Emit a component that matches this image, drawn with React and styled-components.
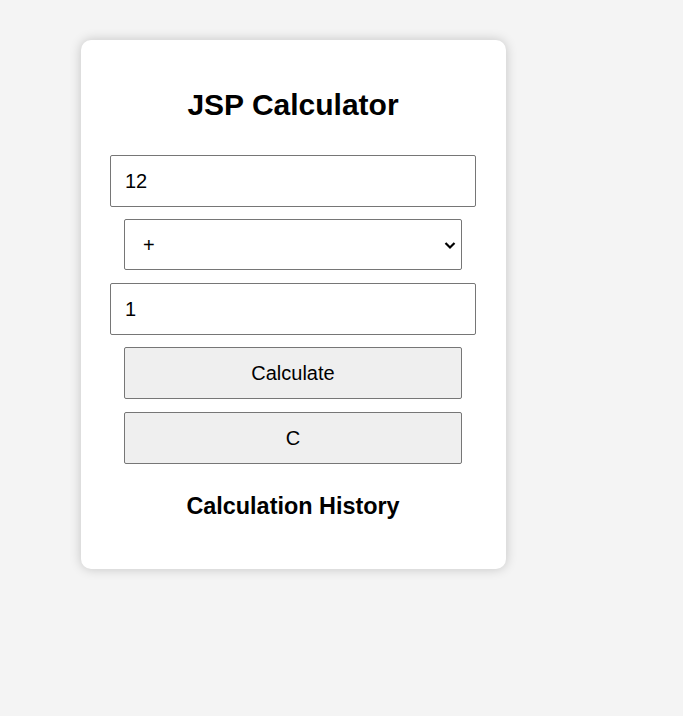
import React, { useState } from "react";
import styled, { createGlobalStyle } from "styled-components";

const GlobalStyle = createGlobalStyle`
  html, body {
    margin: 0;
    padding: 0;
    background: #f4f4f4;
    font-family: "Liberation Sans", Arial, sans-serif;
  }
`;

const Page = styled.div`
  padding: 40px 0 0 81px;
  min-height: 716px;
  box-sizing: border-box;
`;

const Card = styled.div`
  width: 425px;
  box-sizing: border-box;
  background: #fff;
  border-radius: 10px;
  box-shadow: 0 0 12px rgba(0, 0, 0, 0.2);
  padding: 30px 30px 29.5px 29px;
  display: flex;
  flex-direction: column;
  align-items: center;
`;

const Title = styled.h1`
  margin: 18px 0 0;
  font-size: 30px;
  line-height: 34px;
  font-weight: bold;
  color: #000;
`;

const Form = styled.form`
  margin-top: 33px;
  display: flex;
  flex-direction: column;
  align-items: center;
  gap: 12px;
  width: 100%;
`;

const Field = styled.input`
  width: 366px;
  height: 52px;
  box-sizing: border-box;
  border: 1px solid #767676;
  border-radius: 2px;
  padding: 0 14px;
  font-family: inherit;
  font-size: 20px;
  color: #000;
  outline: none;
`;

const SelectWrap = styled.div`
  position: relative;
  width: 338px;
  height: 51px;
  margin-bottom: 1px;
`;

const Select = styled.select`
  appearance: none;
  width: 100%;
  height: 100%;
  box-sizing: border-box;
  border: 1px solid #767676;
  border-radius: 2px;
  background: #fff;
  padding: 0 18px;
  font-family: inherit;
  font-size: 20px;
  color: #000;
  outline: none;
`;

const Chevron = styled.svg`
  position: absolute;
  right: 4px;
  top: 50%;
  transform: translateY(-50%);
  pointer-events: none;
`;

const Button = styled.button`
  width: 338px;
  height: 52px;
  margin-top: ${(p) => (p.$extra ? "1px" : "0")};
  box-sizing: border-box;
  border: 1px solid #767676;
  border-radius: 2px;
  background: #efefef;
  font-family: inherit;
  font-size: 20px;
  color: #000;
  cursor: pointer;
`;

const HistoryTitle = styled.h3`
  margin: 28.5px 0 20px;
  font-size: 23.4px;
  line-height: 27px;
  font-weight: bold;
  color: #000;
`;

export default function App() {
  const [a, setA] = useState("12");
  const [op, setOp] = useState("+");
  const [b, setB] = useState("1");

  return (
    <>
      <GlobalStyle />
      <Page>
        <Card>
          <Title>JSP Calculator</Title>
          <Form onSubmit={(e) => e.preventDefault()}>
            <Field value={a} onChange={(e) => setA(e.target.value)} />
            <SelectWrap>
              <Select value={op} onChange={(e) => setOp(e.target.value)}>
                <option value="+">+</option>
                <option value="-">-</option>
                <option value="*">*</option>
                <option value="/">/</option>
              </Select>
              <Chevron width="16" height="16" viewBox="0 0 16 16">
                <path d="M3.5 6 L8 10.5 L12.5 6" fill="none" stroke="#000" strokeWidth="2.2" />
              </Chevron>
            </SelectWrap>
            <Field value={b} onChange={(e) => setB(e.target.value)} />
            <Button type="submit">Calculate</Button>
            <Button type="button" $extra>C</Button>
          </Form>
          <HistoryTitle>Calculation History</HistoryTitle>
        </Card>
      </Page>
    </>
  );
}
